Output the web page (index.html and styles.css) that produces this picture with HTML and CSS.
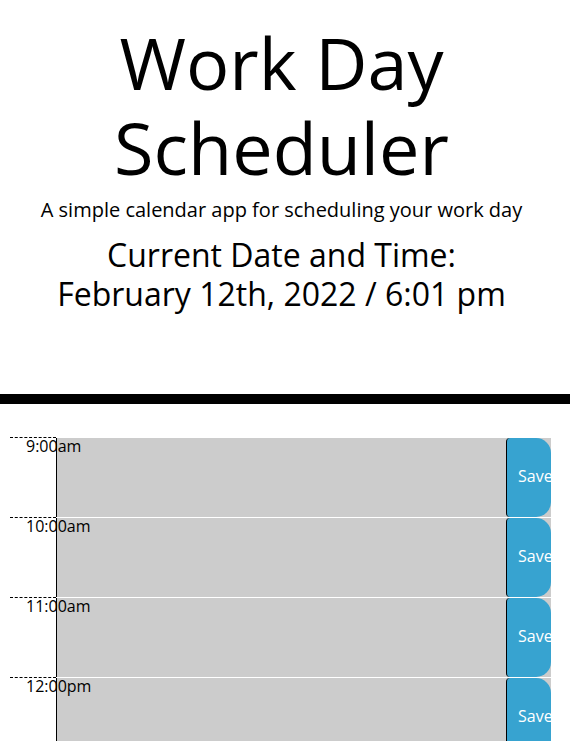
FILE: index.html
```html
<!DOCTYPE html>
<html lang="en">
<head>
<meta charset="utf-8">
<title>Work Day Scheduler</title>
<link rel="stylesheet" href="styles.css">
</head>
<body>
<header class="jumbotron">
  <h1 class="title">Work Day Scheduler</h1>
  <p class="lead">A simple calendar app for scheduling your work day</p>
  <p class="current-day">Current Date and Time:<br>February 12th, 2022 / 6:01 pm</p>
</header>
<main class="container">
  <div class="row"><div class="hour">9:00am</div><textarea class="description"></textarea><button class="save-btn">Save</button></div>
  <div class="row"><div class="hour">10:00am</div><textarea class="description"></textarea><button class="save-btn">Save</button></div>
  <div class="row"><div class="hour">11:00am</div><textarea class="description"></textarea><button class="save-btn">Save</button></div>
  <div class="row"><div class="hour">12:00pm</div><textarea class="description"></textarea><button class="save-btn">Save</button></div>
  <div class="row"><div class="hour">1:00pm</div><textarea class="description"></textarea><button class="save-btn">Save</button></div>
  <div class="row"><div class="hour">2:00pm</div><textarea class="description"></textarea><button class="save-btn">Save</button></div>
  <div class="row"><div class="hour">3:00pm</div><textarea class="description"></textarea><button class="save-btn">Save</button></div>
  <div class="row"><div class="hour">4:00pm</div><textarea class="description"></textarea><button class="save-btn">Save</button></div>
  <div class="row"><div class="hour">5:00pm</div><textarea class="description"></textarea><button class="save-btn">Save</button></div>
</main>
</body>
</html>
```

FILE: styles.css
```css
html, body {
  margin: 0;
  padding: 0;
  background: #ffffff;
  color: #000000;
  font-family: "Open Sans", "Noto Sans", sans-serif;
}

.jumbotron {
  text-align: center;
  padding: 20px 7px 81px 0;
  border-bottom: 10px solid #000000;
}

.title {
  margin: 0;
  font-size: 72px;
  line-height: 85px;
  font-weight: 400;
}

.lead {
  margin: 10px 0 0;
  font-size: 20px;
  line-height: 20px;
}

.current-day {
  margin: 15px 0 0;
  font-size: 32px;
  line-height: 39px;
}

.container {
  padding: 33px 19px 0 10px;
}

.row {
  display: flex;
  height: 80px;
  box-sizing: border-box;
  border-top: 1px solid #ffffff;
  background: #cccccc;
}

.hour {
  width: 46px;
  flex: none;
  box-sizing: border-box;
  background: #ffffff;
  border-top: 1px dashed #000000;
  margin-top: -1px;
  height: 80px;
  padding-left: 16px;
  font-size: 16px;
  line-height: 16px;
  white-space: nowrap;
  position: relative;
  z-index: 1;
}

.description {
  flex: 1;
  margin: 0;
  border: none;
  border-left: 1px solid #000000;
  background: transparent;
  resize: none;
  padding: 10px;
  font-family: inherit;
  font-size: 16px;
  outline: none;
}

.save-btn {
  width: 45px;
  flex: none;
  margin: 0;
  border: none;
  border-left: 1px solid #000000;
  border-radius: 4px 15px 15px 4px;
  background: #37a3d0;
  color: #ffffff;
  font-family: inherit;
  font-size: 16px;
  text-align: left;
  padding: 0 0 3px 11px;
  white-space: nowrap;
  overflow: hidden;
}
```
